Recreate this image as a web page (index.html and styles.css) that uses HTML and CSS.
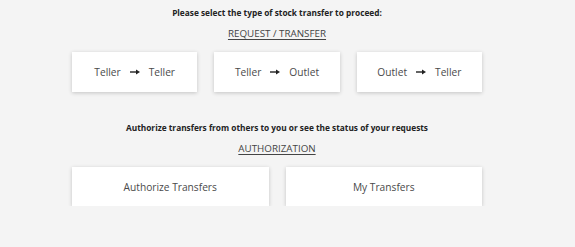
FILE: index.html
```html
<!DOCTYPE html>
<html>
<head>
<meta charset="utf-8">
<link rel="stylesheet" href="styles.css">
</head>
<body>
<div class="page">
  <p class="lead">Please select the type of stock transfer to proceed:</p>
  <p class="section-title">REQUEST / TRANSFER</p>
  <div class="row row-3">
    <div class="card">Teller <svg class="arrow" viewBox="0 0 10 6"><path d="M0 3H7" stroke="#222" stroke-width="1.4"/><path d="M6 0.6L10 3L6 5.4Z" fill="#222"/></svg> Teller</div>
    <div class="card">Teller <svg class="arrow" viewBox="0 0 10 6"><path d="M0 3H7" stroke="#222" stroke-width="1.4"/><path d="M6 0.6L10 3L6 5.4Z" fill="#222"/></svg> Outlet</div>
    <div class="card">Outlet <svg class="arrow" viewBox="0 0 10 6"><path d="M0 3H7" stroke="#222" stroke-width="1.4"/><path d="M6 0.6L10 3L6 5.4Z" fill="#222"/></svg> Teller</div>
  </div>
  <p class="lead lead-2">Authorize transfers from others to you or see the status of your requests</p>
  <p class="section-title">AUTHORIZATION</p>
  <div class="row row-2">
    <div class="card">Authorize Transfers</div>
    <div class="card">My Transfers</div>
  </div>
</div>
</body>
</html>
```

FILE: styles.css
```css
html, body {
  margin: 0;
  padding: 0;
  background: #f4f4f4;
}
body {
  font-family: "Open Sans", "Liberation Sans", sans-serif;
  color: #333;
}
.page {
  width: 410px;
  margin-left: 72px;
  padding-top: 6px;
  display: flex;
  flex-direction: column;
  align-items: stretch;
}
.lead {
  margin: 0;
  text-align: center;
  font-size: 8.3px;
  font-weight: 700;
  line-height: 14px;
  color: #222;
}
.lead-2 {
  margin-top: 29px;
}
.section-title {
  margin: 7px 0 0;
  text-align: center;
  font-size: 9.8px;
  line-height: 14px;
  color: #444;
  text-decoration: underline;
  text-underline-offset: 1.5px;
}
.row {
  display: grid;
  gap: 17px;
  margin-top: 11px;
}
.row-3 {
  grid-template-columns: repeat(3, 1fr);
}
.row-2 {
  grid-template-columns: repeat(2, 1fr);
}
.card {
  height: 40px;
  background: #fff;
  box-shadow: 0 1px 4px rgba(0, 0, 0, 0.2);
  display: flex;
  align-items: center;
  justify-content: center;
  gap: 9px;
  font-size: 10.2px;
  color: #4a4a4a;
}
.row-2 .card {
  height: 39px;
}
.arrow {
  width: 10px;
  height: 6px;
}
```
